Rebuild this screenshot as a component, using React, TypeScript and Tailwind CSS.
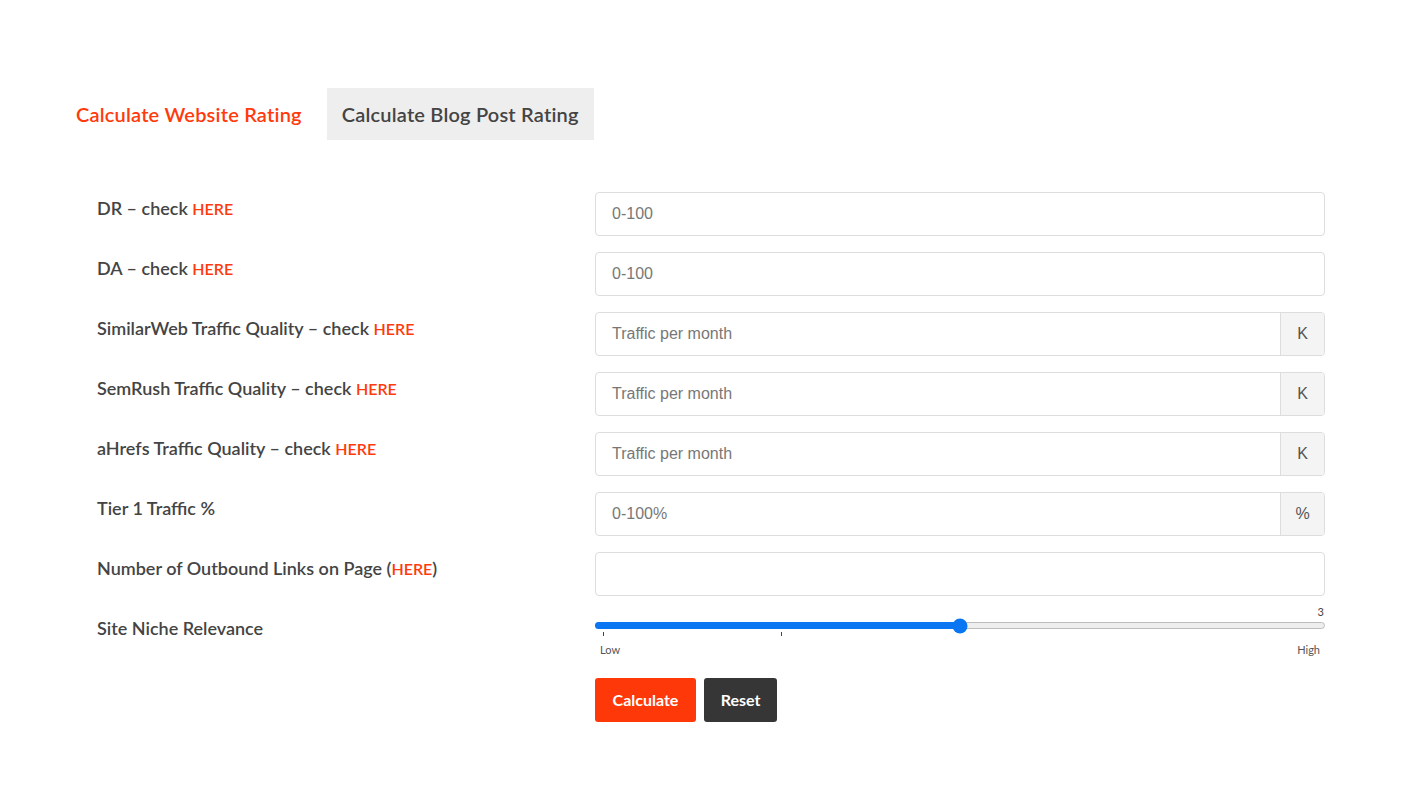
import React from "react";

const font = { fontFamily: "Lato, 'Noto Sans', sans-serif" };

function Here() {
  return <span className="text-[#ff3a0c] font-semibold text-[16px]">HERE</span>;
}

type Row = { label: React.ReactNode; placeholder: string; addon?: string };

const rows: Row[] = [
  { label: <>DR – check <Here /></>, placeholder: "0-100" },
  { label: <>DA – check <Here /></>, placeholder: "0-100" },
  { label: <>SimilarWeb Traffic Quality – check <Here /></>, placeholder: "Traffic per month", addon: "K" },
  { label: <>SemRush Traffic Quality – check <Here /></>, placeholder: "Traffic per month", addon: "K" },
  { label: <>aHrefs Traffic Quality – check <Here /></>, placeholder: "Traffic per month", addon: "K" },
  { label: <>Tier 1 Traffic %</>, placeholder: "0-100%", addon: "%" },
  { label: <>Number of Outbound Links on Page (<Here />)</>, placeholder: "" },
];

export default function App() {
  return (
    <div className="min-h-[812px] w-full bg-white" style={font}>
      <div className="pl-[60px] pt-[88px]">
        <div className="flex items-stretch gap-[9px]">
          <div className="h-[52px] px-[16px] flex items-center text-[20px] tracking-[0.2px] font-semibold text-[#ff3a0c]">
            Calculate Website Rating
          </div>
          <div className="h-[52px] px-[15px] flex items-center text-[20px] tracking-[0.2px] font-semibold text-[#444] bg-[#eeeeee]">
            Calculate Blog Post Rating
          </div>
        </div>

        <div className="pl-[37px] pt-[52px] flex flex-col gap-[16px]">
          {rows.map((r, i) => (
            <div key={i} className="flex">
              <div className="w-[498px] pt-[4px] leading-[24px] text-[18px] font-semibold text-[#444]">
                {r.label}
              </div>
              <div className="w-[730px] h-[44px] flex border border-[#dddddd] rounded-[4px] overflow-hidden">
                <input
                  className="flex-1 min-w-0 pl-[16px] outline-none text-[16px] text-[#333] placeholder:text-[#777]"
                  style={{ fontFamily: "'Liberation Sans', Arial, sans-serif" }}
                  placeholder={r.placeholder}
                />
                {r.addon && (
                  <div
                    className="w-[44px] flex items-center justify-center bg-[#f4f4f4] border-l border-[#dddddd] text-[16px] text-[#555]"
                    style={{ fontFamily: "'Liberation Sans', Arial, sans-serif" }}
                  >
                    {r.addon}
                  </div>
                )}
              </div>
            </div>
          ))}

          <div className="flex">
            <div className="w-[498px] pt-[4px] leading-[24px] text-[18px] font-semibold text-[#444]">
              Site Niche Relevance
            </div>
            <div className="w-[730px] flex flex-col -mt-[5px]">
              <div className="flex justify-end pr-[1px] h-[10px] text-[11px] leading-[10px] text-[#444]">3</div>
              <div className="relative mt-[5px] h-[7px]">
                <div className="absolute inset-0 rounded-full bg-[#eeeeee] border border-[#bdbdbd]" />
                <div className="absolute left-0 top-0 h-[7px] w-[50%] rounded-full bg-[#0a76f2]" />
                <div className="absolute left-[50%] top-1/2 -translate-x-1/2 -translate-y-1/2 w-[15px] h-[15px] rounded-full bg-[#0a76f2]" />
              </div>
              <div className="relative h-[8px]">
                <div className="absolute left-[8px] top-[3px] w-px h-[4px] bg-[#444]" />
                <div className="absolute left-[186px] top-[3px] w-px h-[4px] bg-[#444]" />
              </div>
              <div className="flex justify-between px-[5px] mt-[7px] text-[11px] leading-[12px] text-[#555]">
                <span>Low</span>
                <span>High</span>
              </div>
              <div className="flex gap-[8px] mt-[22px]">
                <button className="h-[44px] w-[101px] rounded-[3px] bg-[#ff380a] text-white text-[16px] font-bold">
                  Calculate
                </button>
                <button className="h-[44px] w-[73px] rounded-[3px] bg-[#363636] text-white text-[16px] font-bold">
                  Reset
                </button>
              </div>
            </div>
          </div>
        </div>
      </div>
    </div>
  );
}
